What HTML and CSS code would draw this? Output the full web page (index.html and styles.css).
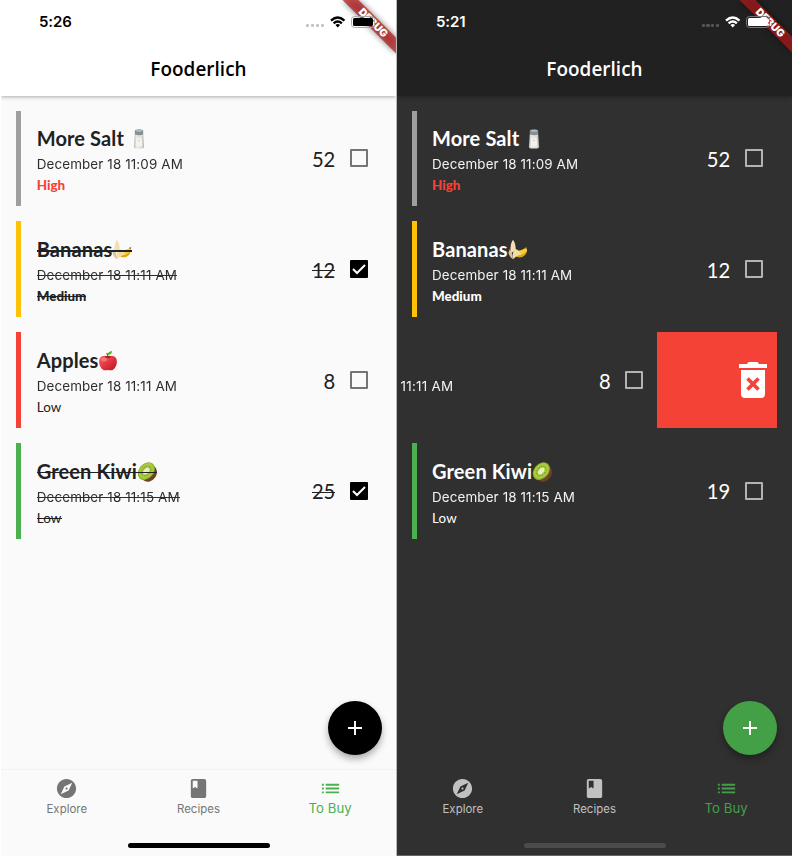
FILE: index.html
```html
<!DOCTYPE html>
<html lang="en">
<head>
<meta charset="utf-8">
<title>Fooderlich</title>
<link rel="stylesheet" href="styles.css">
</head>
<body>
<svg class="defs" aria-hidden="true">
  <defs>
    <linearGradient id="gApple" x1="0" y1="0" x2="1" y2="1"><stop offset="0" stop-color="#f6606a"/><stop offset=".5" stop-color="#e23540"/><stop offset="1" stop-color="#b81420"/></linearGradient>
    <linearGradient id="gSalt" x1="0" x2="1"><stop offset="0" stop-color="#b9bbb8"/><stop offset=".25" stop-color="#e9e8e4"/><stop offset=".75" stop-color="#dfddd8"/><stop offset="1" stop-color="#b0b1ae"/></linearGradient>
    <filter id="soft" x="-30%" y="-30%" width="160%" height="160%"><feGaussianBlur stdDeviation="3.2"/></filter>
  </defs>
  <symbol id="salt" viewBox="0 0 20 20"><path d="M5.800 5h8.400l.9 12.800q0 1.800-1.800 1.800H6.700q-1.800 0-1.800-1.800z" fill="url(#gSalt)"/><path d="M7.300 9.200h5.400l.6 8.300H6.700z" fill="#f4f2ec"/><path d="M5.800 5.600V2q0-1.800 4.200-1.800T14.200 2v3.600q-4 1.300-8.400 0z" fill="#82909a"/><ellipse cx="10" cy="1.700" rx="3.400" ry="1" fill="#aeb9c0"/><path d="M9.200 11.600h1.600" stroke="#999" stroke-width=".6"/></symbol>
  <symbol id="banana" viewBox="0 0 20 20"><path d="M6.500 9Q9 13.200 18.200 7.500q2 3-.3 6-2.900 4.200-7.400 3.800Q6.500 16.500 6.200 13z" fill="#f7ce38"/><path d="M8 14q5 2.600 10.700-2.800-1 4.400-4.700 5.700-3.600 1-6.300-1z" fill="#dca51d"/><path d="M4.200.8q.9-1 1.700.3 2.300 4.200 1.600 9.200L3.200 13Q1.200 7 4.200.8z" fill="#f3dfb3"/><path d="M1.800 9Q4.500 12 5 19.200q-3.800-2-4.500-6.700z" fill="#dcc3a0"/><path d="M6.800 9q4.300.5 6.400 5.500Q8 15.500 5.500 19.300 3.300 14 6.800 9z" fill="#f3dda0"/><path d="M17.600 7l1.300.2-.2 2-1-.4z" fill="#836322"/></symbol>
  <symbol id="apple" viewBox="0 0 20 20"><path d="M10 5.600C7.800 4.300 4 4.200 2 7-.2 11 2 16.700 5 18.800c1.700 1.100 3.300.2 5 .2s3.300.9 5-.2c3-2.100 5.200-7.800 3-11.800-2-2.800-5.800-2.700-8-1.400z" fill="url(#gApple)"/><ellipse cx="6" cy="8.500" rx="3" ry="2" fill="#ff9a94" opacity=".55"/><ellipse cx="10" cy="5.900" rx="3" ry="1" fill="#a01b22"/><path d="M10 6Q9.700 3.500 8.700 2" stroke="#6d3d20" stroke-width="1.100" fill="none"/><path d="M9.400 4.200Q9.800.5 14 0q.2 4-4.600 4.200z" fill="#57b52f"/></symbol>
  <symbol id="kiwi" viewBox="0 0 20 20"><ellipse cx="11.600" cy="11" rx="8" ry="9" transform="rotate(35 11.600 11)" fill="#6b4423"/><ellipse cx="9.300" cy="9.100" rx="7.400" ry="9.800" transform="rotate(42 9.300 9.100)" fill="#8bab2e"/><ellipse cx="9.300" cy="9" rx="6.500" ry="8.900" transform="rotate(42 9.300 9)" fill="#a7c93c"/><ellipse cx="9.300" cy="9" rx="3.900" ry="5.300" transform="rotate(42 9.300 9)" fill="none" stroke="#4b6120" stroke-width=".9" stroke-dasharray=".7 1.500"/><ellipse cx="9.300" cy="9" rx="2.400" ry="3.900" transform="rotate(42 9.300 9)" fill="#eaf0bd"/></symbol>
  <symbol id="wifi" viewBox="0 0 16 12"><path d="M.2 3.600Q8-3.400 15.800 3.600L14.100 5.400Q8 0 1.900 5.400zM2.900 6.400Q8 2 13.100 6.400l-1.700 1.800Q8 5.200 4.600 8.200zM5.600 9.200Q8 7.100 10.400 9.200L8 11.700z" fill="currentColor"/></symbol>
  <symbol id="explore" viewBox="0 0 24 24"><path fill="currentColor" d="M12 10.900c-.61 0-1.100.49-1.100 1.100s.49 1.100 1.100 1.100c.61 0 1.100-.49 1.100-1.100s-.49-1.100-1.100-1.100zM12 2C6.480 2 2 6.480 2 12s4.480 10 10 10 10-4.480 10-10S17.520 2 12 2zm2.190 12.190L6 18l3.810-8.190L18 6l-3.810 8.190z"/></symbol>
  <symbol id="book" viewBox="0 0 24 24"><path fill="currentColor" d="M18 2H6c-1.100 0-2 .9-2 2v16c0 1.100.9 2 2 2h12c1.100 0 2-.9 2-2V4c0-1.100-.9-2-2-2zM6 4h5v8l-2.500-1.500L6 12V4z"/></symbol>
  <symbol id="list" viewBox="0 0 24 24"><path fill="currentColor" d="M3 13h2v-2H3v2zm0 4h2v-2H3v2zm0-8h2V7H3v2zm4 4h14v-2H7v2zm0 4h14v-2H7v2zM7 7v2h14V7H7z"/></symbol>
  <symbol id="trash" viewBox="0 0 28 36"><path fill="currentColor" d="M0 2h8l1.500-2h9L20 2h8v4H0zM2 8h24v24q0 4-4 4H6q-4 0-4-4z"/><path d="M8.500 16.500l11 11m0-11l-11 11" stroke="#f44336" stroke-width="3.600"/></symbol>
</svg>
<main class="screens">
  <section class="phone light">
    <header class="appbar">
      <div class="status"><span class="clock">5:26</span><span class="signal"><i></i><i></i><i></i><i></i></span><svg class="wifi"><use href="#wifi"/></svg><span class="battery"></span></div>
      <h1>Fooderlich</h1>
      <svg class="banner" viewBox="0 0 60 60"><path d="M6.500 0h16L60 37.500v16z" filter="url(#soft)" opacity=".5"/><path class="ribbon" d="M6.500 0h16L60 37.500v16z"/><text transform="translate(37.300 22.700) rotate(45)" y="3.600" text-anchor="middle">DEBUG</text></svg>
    </header>
    <ul class="list">
      <li class="item grey"><div class="info"><h2><span>More Salt <svg><use href="#salt"/></svg></span></h2><p class="date"><span>December 18 11:09 AM</span></p><p class="level high"><span>High</span></p></div><b class="count"><span>52</span></b><i class="check"></i></li>
      <li class="item amber done"><div class="info"><h2><span>Bananas<svg><use href="#banana"/></svg></span></h2><p class="date"><span>December 18 11:11 AM</span></p><p class="level medium"><span>Medium</span></p></div><b class="count"><span>12</span></b><i class="check"><svg viewBox="0 0 18 18"><path d="M3 9l4 4 8-8"/></svg></i></li>
      <li class="item red"><div class="info"><h2><span>Apples<svg><use href="#apple"/></svg></span></h2><p class="date"><span>December 18 11:11 AM</span></p><p class="level"><span>Low</span></p></div><b class="count"><span>8</span></b><i class="check"></i></li>
      <li class="item green done"><div class="info"><h2><span>Green Kiwi<svg><use href="#kiwi"/></svg></span></h2><p class="date"><span>December 18 11:15 AM</span></p><p class="level"><span>Low</span></p></div><b class="count"><span>25</span></b><i class="check"><svg viewBox="0 0 18 18"><path d="M3 9l4 4 8-8"/></svg></i></li>
    </ul>
    <div class="fab"><svg viewBox="0 0 14 14"><path d="M7 0v14M0 7h14"/></svg></div>
    <footer><nav><a><svg><use href="#explore"/></svg>Explore</a><a><svg><use href="#book"/></svg>Recipes</a><a class="active"><svg><use href="#list"/></svg>To Buy</a></nav><div class="home"></div></footer>
  </section>
  <section class="phone dark">
    <header class="appbar">
      <div class="status"><span class="clock">5:21</span><span class="signal"><i></i><i></i><i></i><i></i></span><svg class="wifi"><use href="#wifi"/></svg><span class="battery"></span></div>
      <h1>Fooderlich</h1>
      <svg class="banner" viewBox="0 0 60 60"><path d="M6.500 0h16L60 37.500v16z" filter="url(#soft)" opacity=".5"/><path class="ribbon" d="M6.500 0h16L60 37.500v16z"/><text transform="translate(37.300 22.700) rotate(45)" y="3.600" text-anchor="middle">DEBUG</text></svg>
    </header>
    <ul class="list">
      <li class="item grey"><div class="info"><h2><span>More Salt <svg><use href="#salt"/></svg></span></h2><p class="date"><span>December 18 11:09 AM</span></p><p class="level high"><span>High</span></p></div><b class="count"><span>52</span></b><i class="check"></i></li>
      <li class="item amber"><div class="info"><h2><span>Bananas<svg><use href="#banana"/></svg></span></h2><p class="date"><span>December 18 11:11 AM</span></p><p class="level medium"><span>Medium</span></p></div><b class="count"><span>12</span></b><i class="check"></i></li>
      <li class="item swiped"><p class="date"><span>11:11 AM</span></p><b class="count"><span>8</span></b><i class="check"></i><div class="delete"><svg><use href="#trash"/></svg></div></li>
      <li class="item green"><div class="info"><h2><span>Green Kiwi<svg><use href="#kiwi"/></svg></span></h2><p class="date"><span>December 18 11:15 AM</span></p><p class="level"><span>Low</span></p></div><b class="count"><span>19</span></b><i class="check"></i></li>
    </ul>
    <div class="fab"><svg viewBox="0 0 14 14"><path d="M7 0v14M0 7h14"/></svg></div>
    <footer><nav><a><svg><use href="#explore"/></svg>Explore</a><a><svg><use href="#book"/></svg>Recipes</a><a class="active"><svg><use href="#list"/></svg>To Buy</a></nav><div class="home"></div></footer>
  </section>
</main>
</body>
</html>
```
FILE: styles.css
```css
* { box-sizing: border-box; margin: 0; padding: 0; }
body { width: 792px; height: 856px; overflow: hidden; background: #fff; font-family: Inter, sans-serif; }
.defs { position: absolute; width: 0; height: 0; }
.screens { display: flex; height: 856px; padding-left: 1px; }
.phone { position: relative; display: flex; flex-direction: column; height: 856px; overflow: hidden; }
.light { width: 396px; border-right: 1px solid #b9b9b9; background: #fafafa; color: #212121; --bar: #fff; --ink: #000; --box: #757575; --dots: #c4c4c4; --fab: #000; --active: #4caf50; --idle: #757575; --home: #000; --line: #f2f2f2; --edge: #aaa; }
.dark { width: 395px; border-bottom: 1px solid #666; background: #303030; color: #fff; --bar: #212121; --ink: #fff; --box: #b3b3b3; --dots: #555; --fab: #43a047; --active: #43a047; --idle: #c1c1c1; --home: #4b4b4b; --line: #2e2e2e; --edge: #777; }
.appbar { position: relative; flex: none; height: 95.5px; background: var(--bar); color: var(--ink); box-shadow: 0 1px 4px rgba(0,0,0,.32); }
.status { position: relative; z-index: 2; display: flex; align-items: center; height: 43px; padding-left: 38px; }
.dark .status { padding-left: 39px; }
.clock { width: 267px; font-size: 15px; font-weight: 600; letter-spacing: -.1px; }
.dark .clock { width: 265.5px; }
.signal { display: flex; gap: 1.7px; width: 19px; margin: 8px 4.5px 0 0; }
.signal i { width: 3.2px; height: 3.2px; border-radius: 1px; background: var(--dots); }
.wifi { width: 15.5px; height: 12px; margin-right: 5.5px; }
.battery { width: 24px; height: 12px; border: 1px solid var(--edge); border-radius: 3.5px; background: var(--ink) content-box; padding: 1px; }
h1 { padding-top: 11px; font: 600 18.9px/30px "Open Sans", sans-serif; text-align: center; letter-spacing: .05px; }
.banner { position: absolute; top: 0; right: -1px; width: 60px; height: 60px; }
.light .banner { right: 0; }
.ribbon { fill: #b71c1c; opacity: .7; }
.light .ribbon { opacity: .72; }
.banner text { fill: #fff; font: 900 10.4px Inter, sans-serif; }
.list { display: flex; flex-direction: column; gap: 15.2px; padding: 15.2px 15px 0; list-style: none; }
.item { display: flex; height: 95.6px; border-left: 5px solid; padding: 15.6px 13.3px 0 15.7px; }
.dark .item { padding-left: 15px; padding-right: 14.4px; }
.grey { border-color: #9e9e9e; } .amber { border-color: #ffc107; } .red { border-color: #f44336; } .green { border-color: #4caf50; }
.info { flex: 1; }
h2 { font: 700 20px/24px Lato, sans-serif; white-space: nowrap; letter-spacing: .12px; }
h2 svg { width: 20px; height: 20px; vertical-align: -3px; }
h2 span, p span, .count span { position: relative; display: inline-block; }
.date { font-size: 13.4px; line-height: 20px; letter-spacing: .13px; margin-top: 4px; opacity: .94; }
.level { font: 400 13.4px/20px Lato, sans-serif; letter-spacing: .15px; margin-top: 1px; }
.high, .medium { font-weight: 900; letter-spacing: 0; }
.high { color: #f44336; }
.count { font: 400 20.2px/24px Lato, sans-serif; margin: 20.7px 14.4px 0 0; }
.check { width: 18px; height: 18px; margin-top: 22.9px; border: 2px solid var(--box); border-radius: 1px; }
.done .check { border: 0; background: #000; }
.check svg { display: block; width: 18px; height: 18px; fill: none; stroke: #fff; stroke-width: 2; }
.done span::after { content: ""; position: absolute; left: 0; right: 0; top: 51%; height: 1px; background: currentColor; }
.done h2 span::after { height: 1.5px; top: 54%; }
.dark .swiped { border: 0; margin: 0 0 0 -15px; padding: 0 0 0 3.5px; }
.swiped .date { width: 198.5px; margin-top: 43.5px; letter-spacing: .25px; }
.swiped .count { margin-top: 36.6px; }
.swiped .check { margin: 38.5px 14px 0 0; }
.delete { flex: 1; background: #f44336; padding: 30px 10px 0 0; text-align: right; }
.delete svg { width: 28px; height: 36px; color: #fff; }
.fab { position: absolute; right: 14.3px; bottom: 101.2px; display: grid; place-items: center; width: 54px; height: 54px; border-radius: 50%; background: var(--fab); box-shadow: 0 4px 7px rgba(0,0,0,.32); }
.dark .fab { right: 15px; bottom: 100.2px; }
.fab svg { width: 14px; height: 14px; stroke: #fff; stroke-width: 1.9; }
footer { margin-top: auto; height: 87px; border-top: 1px solid var(--line); }
.dark footer { height: 86px; }
nav { display: flex; height: 73px; }
nav a { flex: 1; display: flex; flex-direction: column; align-items: center; padding-top: 7px; font-size: 11.4px; line-height: 16px; letter-spacing: .05px; color: var(--idle); }
nav svg { width: 23px; height: 23px; margin-bottom: .5px; }
nav .active { color: var(--active); font-size: 13.2px; line-height: 14.5px; }
.home { width: 142px; height: 5px; margin: 0 auto; border-radius: 3px; background: var(--home); }
```
